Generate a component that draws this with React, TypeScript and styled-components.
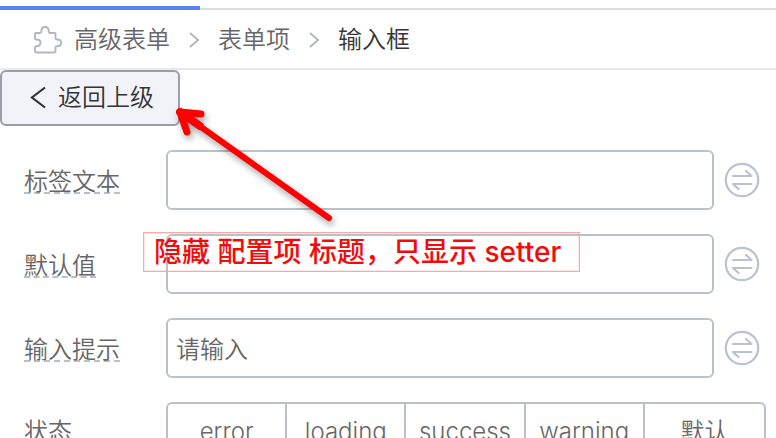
import React from "react";
import styled, { createGlobalStyle } from "styled-components";

const GlobalStyle = createGlobalStyle`
  *, *::before, *::after { box-sizing: border-box; }
  body {
    margin: 0;
    background: #fff;
    color: #666;
    font-family: Inter, "Noto Sans CJK SC", sans-serif;
    font-size: 24px;
    font-weight: 350;
    line-height: 36px;
  }
  button, input { font: inherit; color: inherit; }
`;

const Panel = styled.main`
  position: relative;
  height: 100vh;
  overflow: hidden;
`;

const TabTrack = styled.div`
  display: flex;
  align-items: flex-end;
  height: 10px;
  box-shadow: inset 0 -2px #dcdcdd;
`;

const ActiveTab = styled.div`
  width: 200px;
  height: 4px;
  background: #5584ee;
`;

const Breadcrumb = styled.nav`
  display: flex;
  align-items: center;
  height: 60px;
  padding: 2px 0 0 32px;
  border-bottom: 2px solid #e8e9ea;

  > svg:first-child { margin-right: 12px; }
`;

const Crumb = styled.a<{ $current?: boolean }>`
  color: ${(p) => (p.$current ? "#333" : "#666")};
  text-decoration: none;
`;

const Separator = styled.svg`
  width: 12px;
  height: 16px;
  margin: 0 18px;
`;

const BackButton = styled.button`
  display: flex;
  align-items: center;
  gap: 12px;
  width: 180px;
  height: 56px;
  padding: 0 0 0 28px;
  border: 2px solid #9b9ea8;
  border-radius: 6px;
  background: #f2f3f8;
  color: #333;
`;

const Form = styled.form`
  display: grid;
  gap: 24px;
  padding: 24px 10px 24px 24px;
`;

const Row = styled.div`
  display: grid;
  grid-template-columns: 142px 1fr;
  align-items: center;
  min-height: 60px;
`;

const Field = styled.div`
  display: flex;
  align-items: center;
  gap: 10px;
  padding-right: 6px;
`;

const Label = styled.label`
  justify-self: start;
  height: 26px;
  margin-top: 2px;
  line-height: 28px;
  border-bottom: 2px dashed #b9c0cc;
`;

const GroupLabel = styled.span`
  line-height: 28px;
`;

const TextInput = styled.input`
  flex: 1;
  min-width: 0;
  height: 60px;
  padding: 2px 8px 0;
  border: 2px solid #bac1ca;
  border-radius: 6px;
  outline: none;
  background: #fff;

  &::placeholder { color: #666; opacity: 1; }
`;

const SwapButton = styled.button`
  display: block;
  width: 36px;
  height: 36px;
  padding: 0;
  border: 0;
  background: none;

  svg { display: block; }
`;

const Segments = styled.div`
  display: grid;
  grid-template-columns: repeat(5, 1fr);
  height: 60px;
  border: 2px solid #bdc0cc;
  border-radius: 6px;
`;

const Segment = styled.label`
  display: flex;
  align-items: center;
  justify-content: center;

  &:not(:last-child) { border-right: 2px solid #bdc0cc; }

  input {
    position: absolute;
    opacity: 0;
    pointer-events: none;
  }
`;

const Arrow = styled.svg`
  position: absolute;
  left: 168px;
  top: 100px;
  filter: drop-shadow(2px 4px 3px rgba(0, 0, 0, 0.35));
  pointer-events: none;
`;

const Note = styled.div`
  position: absolute;
  left: 143px;
  top: 232px;
  width: 437px;
  height: 40px;
  padding-left: 10px;
  border: 1px solid #ffa6a6;
  box-shadow: inset 0 0 0 1px rgba(255, 0, 0, 0.1);
  color: #f50a0a;
  font-size: 28px;
  font-weight: 500;
  line-height: 38px;
  white-space: nowrap;
  pointer-events: none;
`;

const PuzzleIcon = () => (
  <svg width="30" height="30" viewBox="0 0 30 30" fill="none" stroke="#b1b6c4" strokeWidth="1.900" strokeLinejoin="round" aria-hidden="true">
    <path d="M4 8h4q1.300 0 1.300-1.500C9.300 3.500 10.800 2 13 2s3.700 1.500 3.700 4.500q0 1.500 1.300 1.500h4.500q1 0 1 1v4q0 1.500 1.500 1.500c2.500 0 4.200 1.300 4.200 3.300s-1.700 3.300-4.200 3.300q-1.500 0-1.500 1.500V26q0 1.500-1.500 1.500H4.500Q3 27.500 3 26v-3.500q0-1.300 1.500-1.300c2.500 0 4-1.400 4-3.400s-1.500-3.300-4-3.300Q3 14.500 3 13.200V9q0-1 1-1z" />
  </svg>
);

const Chevron = () => (
  <Separator viewBox="0 0 12 16" fill="none" stroke="#aeb2b9" strokeWidth="1.800" aria-hidden="true">
    <path d="M2 1l8 7-8 7" />
  </Separator>
);

const SwapIcon = () => (
  <svg width="36" height="36" viewBox="0 0 36 36" fill="none" stroke="#bbc1d0" strokeWidth="2.200" strokeLinecap="round" strokeLinejoin="round" aria-hidden="true">
    <circle cx="18" cy="18" r="16.200" />
    <path d="M9 14h18.500l-5.500-5M27.500 22H9l5.500 5" />
  </svg>
);

const fields = [
  { id: "label-text", label: "标签文本", placeholder: "" },
  { id: "default-value", label: "默认值", placeholder: "" },
  { id: "input-hint", label: "输入提示", placeholder: "请输入" },
];

const states = ["error", "loading", "success", "warning", "默认"];

export default function App() {
  return (
    <Panel>
      <GlobalStyle />
      <TabTrack>
        <ActiveTab />
      </TabTrack>
      <Breadcrumb>
        <PuzzleIcon />
        <Crumb href="#form">高级表单</Crumb>
        <Chevron />
        <Crumb href="#item">表单项</Crumb>
        <Chevron />
        <Crumb href="#input" $current aria-current="page">输入框</Crumb>
      </Breadcrumb>
      <BackButton type="button">
        <svg width="16" height="24" viewBox="0 0 16 24" fill="none" stroke="#333" strokeWidth="2.200" aria-hidden="true">
          <path d="M15 1.500L2 11.500l13 10" />
        </svg>
        返回上级
      </BackButton>
      <Form>
        {fields.map((f) => (
          <Row key={f.id}>
            <Label htmlFor={f.id}>{f.label}</Label>
            <Field>
              <TextInput id={f.id} type="text" placeholder={f.placeholder} />
              <SwapButton type="button" aria-label={`切换${f.label}`}>
                <SwapIcon />
              </SwapButton>
            </Field>
          </Row>
        ))}
        <Row>
          <GroupLabel id="state">状态</GroupLabel>
          <Segments role="radiogroup" aria-labelledby="state">
            {states.map((s) => (
              <Segment key={s}>
                <input type="radio" name="state" value={s} />
                {s}
              </Segment>
            ))}
          </Segments>
        </Row>
      </Form>
      <Arrow width="172" height="130" viewBox="0 0 172 130" fill="none" stroke="#f00" strokeLinecap="round" strokeLinejoin="round" aria-hidden="true">
        <path d="M33 14L12 12l7 20" strokeWidth="7" />
        <path d="M12 12l20 14" strokeWidth="8" />
        <path d="M12 12l149 106" strokeWidth="6" />
      </Arrow>
      <Note>隐藏 配置项 标题，只显示 setter</Note>
    </Panel>
  );
}
